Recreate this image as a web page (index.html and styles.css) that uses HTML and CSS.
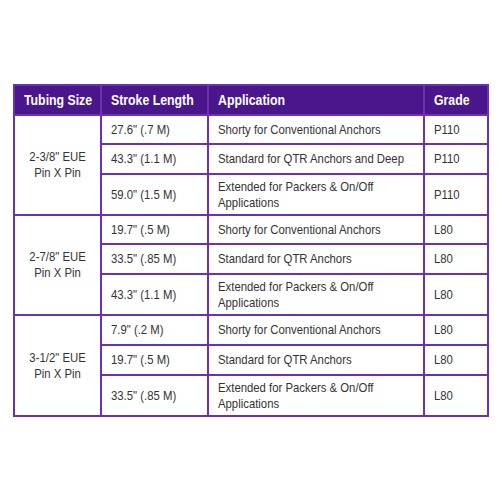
FILE: index.html
```html
<!DOCTYPE html>
<html>
<head>
<meta charset="utf-8">
<link rel="stylesheet" href="styles.css">
</head>
<body>
<div class="page">
<table class="spec">
<colgroup>
<col class="c1"><col class="c2"><col class="c3"><col class="c4">
</colgroup>
<thead>
<tr><th><span class="t">Tubing Size</span></th><th><span class="t">Stroke Length</span></th><th><span class="t">Application</span></th><th><span class="t">Grade</span></th></tr>
</thead>
<tbody>
<tr class="r1"><td class="size" rowspan="3"><span class="t">2-3/8" EUE<br>Pin X Pin</span></td><td><span class="t">27.6" (.7 M)</span></td><td><span class="t">Shorty for Conventional Anchors</span></td><td><span class="t">P110</span></td></tr>
<tr class="r2"><td><span class="t">43.3" (1.1 M)</span></td><td><span class="t">Standard for QTR Anchors and Deep</span></td><td><span class="t">P110</span></td></tr>
<tr class="r3"><td><span class="t">59.0" (1.5 M)</span></td><td><span class="t">Extended for Packers &amp; On/Off<br>Applications</span></td><td><span class="t">P110</span></td></tr>
<tr class="r1"><td class="size" rowspan="3"><span class="t">2-7/8" EUE<br>Pin X Pin</span></td><td><span class="t">19.7" (.5 M)</span></td><td><span class="t">Shorty for Conventional Anchors</span></td><td><span class="t">L80</span></td></tr>
<tr class="r2"><td><span class="t">33.5" (.85 M)</span></td><td><span class="t">Standard for QTR Anchors</span></td><td><span class="t">L80</span></td></tr>
<tr class="r3"><td><span class="t">43.3" (1.1 M)</span></td><td><span class="t">Extended for Packers &amp; On/Off<br>Applications</span></td><td><span class="t">L80</span></td></tr>
<tr class="r1 last"><td class="size" rowspan="3"><span class="t">3-1/2" EUE<br>Pin X Pin</span></td><td><span class="t">7.9" (.2 M)</span></td><td><span class="t">Shorty for Conventional Anchors</span></td><td><span class="t">L80</span></td></tr>
<tr class="r2 last"><td><span class="t">19.7" (.5 M)</span></td><td><span class="t">Standard for QTR Anchors</span></td><td><span class="t">L80</span></td></tr>
<tr class="r3"><td><span class="t">33.5" (.85 M)</span></td><td><span class="t">Extended for Packers &amp; On/Off<br>Applications</span></td><td><span class="t">L80</span></td></tr>
</tbody>
</table>
</div>
</body>
</html>
```
FILE: styles.css
```css
html, body {
  margin: 0;
  padding: 0;
  background: #ffffff;
}
.page {
  padding: 84px 0 0 13px;
}
.spec {
  width: 474px;
  table-layout: fixed;
  border-collapse: collapse;
  font-family: "Liberation Sans", Arial, sans-serif;
  color: #333333;
}
.c1 { width: 87px; }
.c2 { width: 107px; }
.c3 { width: 216px; }
.c4 { width: 64px; }
.spec th, .spec td {
  border: 2px solid #6a30b5;
  padding: 0 3px 0 9px;
  text-align: left;
  vertical-align: middle;
  box-sizing: border-box;
  white-space: nowrap;
  overflow: visible;
}
.t {
  display: inline-block;
  transform-origin: 0 50%;
}
.spec th {
  background: #4a168c;
  color: #ffffff;
  font-weight: bold;
  font-size: 15px;
  line-height: 18px;
  height: 30px;
}
.spec th .t {
  transform: scaleX(0.82);
}
.spec td {
  font-size: 13.5px;
  line-height: 16px;
}
.spec td .t {
  transform: scaleX(0.84);
}
.spec td.size {
  text-align: center;
  padding: 0 2px;
}
.spec td.size .t {
  transform-origin: 50% 50%;
}
.r1 td { height: 29px; }
.r2 td { height: 30px; }
.r3 td { height: 41px; }
.r1.last td { height: 30px; }
.spec td.size { height: auto; }
```
